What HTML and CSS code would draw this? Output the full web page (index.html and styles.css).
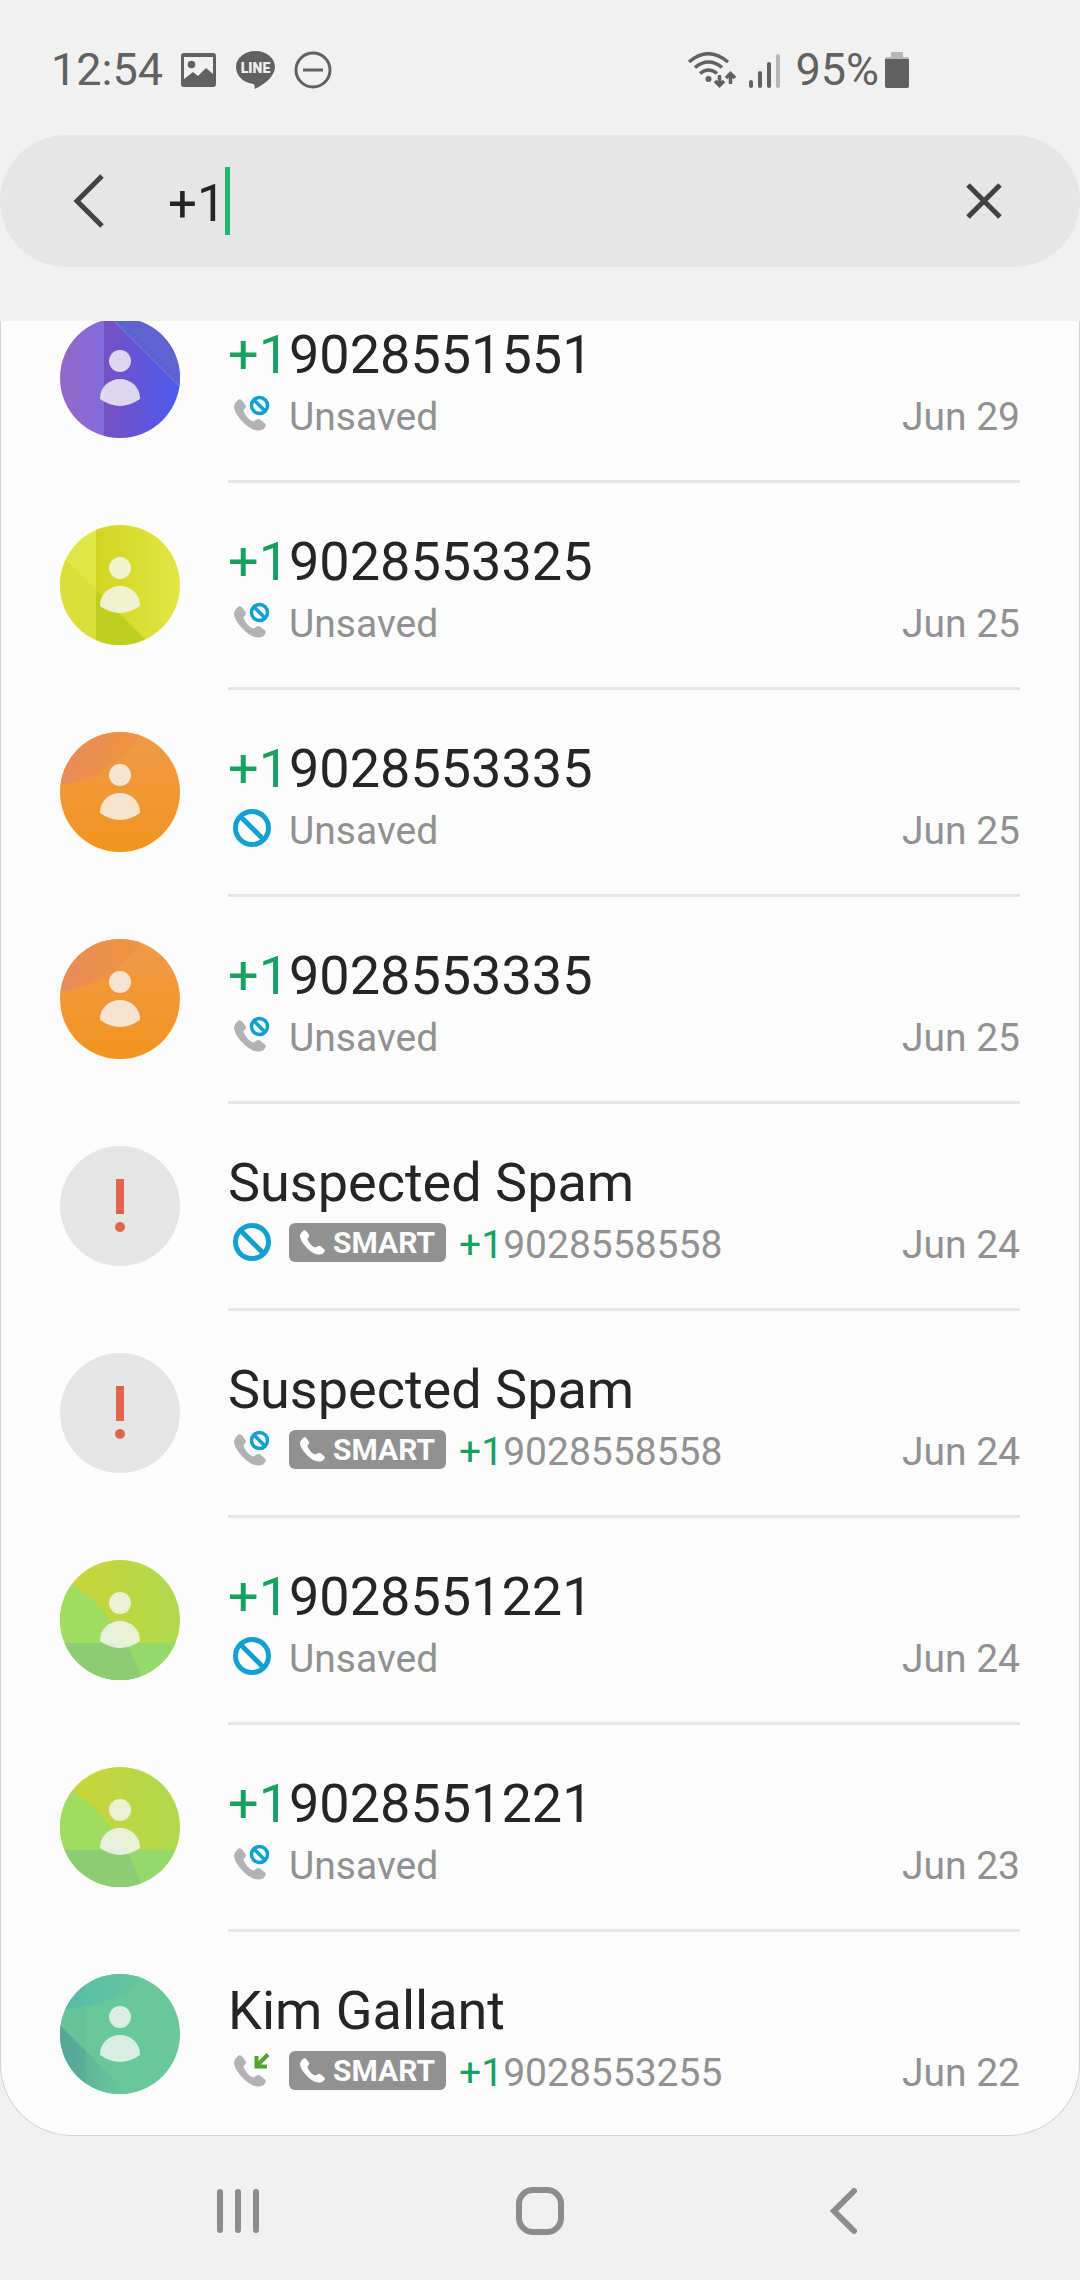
FILE: index.html
```html
<!DOCTYPE html>
<html lang="en">
<head>
<meta charset="utf-8">
<meta name="viewport" content="width=device-width, initial-scale=1">
<title>Search calls</title>
<link rel="stylesheet" href="styles.css">
</head>
<body>
<svg class="sprite" width="0" height="0" aria-hidden="true">
  <defs>
    <linearGradient id="purple-left"><stop offset="0" stop-color="#9666c8"/><stop offset="1" stop-color="#826cdb"/></linearGradient>
    <linearGradient id="purple-right"><stop offset="0" stop-color="#7850c2"/><stop offset="1" stop-color="#4b5bf0"/></linearGradient>
    <linearGradient id="yellow-right"><stop offset="0" stop-color="#d2d51f"/><stop offset="1" stop-color="#e2e645"/></linearGradient>
    <linearGradient id="orange-base" x2="0" y2="1"><stop offset="0" stop-color="#ef9a4a"/><stop offset="1" stop-color="#f3941e"/></linearGradient>
    <linearGradient id="orange-arc" gradientUnits="userSpaceOnUse" x1="8" y1="30" x2="66" y2="44"><stop offset="0" stop-color="#e88c5a"/><stop offset="1" stop-color="#ee933e"/></linearGradient>
    <linearGradient id="lime-base"><stop offset="0" stop-color="#cdd335"/><stop offset="1" stop-color="#aeda4e"/></linearGradient>
    <linearGradient id="teal-arc" gradientUnits="userSpaceOnUse" x1="5" y1="30" x2="82" y2="30"><stop offset="0" stop-color="#59bba8"/><stop offset="1" stop-color="#66c69d"/></linearGradient>
    <linearGradient id="teal-dark" gradientUnits="userSpaceOnUse" x1="0" y1="0" x2="62" y2="0"><stop offset="0" stop-color="#58a998"/><stop offset="1" stop-color="#68c79a"/></linearGradient>
    <clipPath id="disc"><circle cx="60" cy="60" r="60"/></clipPath>

    <symbol id="person" viewBox="0 0 120 120">
      <circle cx="60" cy="43" r="11"/>
      <path d="M40 81v-1a20 19 0 0 1 40 0v1q-20 14-40 0z"/>
    </symbol>
    <symbol id="avatar-purple" viewBox="0 0 120 120">
      <g clip-path="url(#disc)">
        <path d="M0 0h44v120H0z" fill="url(#purple-left)"/>
        <path d="M44 0h76v120H44z" fill="url(#purple-right)"/>
        <path d="M51 0h69v69z" fill="#5f63d2"/>
        <path d="M51 0l69 69" stroke="#7c7ee0" stroke-width="1"/>
      </g>
      <use href="#person" fill="#f8f8f8" fill-opacity=".8"/>
    </symbol>
    <symbol id="avatar-yellow" viewBox="0 0 120 120">
      <g clip-path="url(#disc)">
        <path d="M0 0h36v120H0z" fill="#e0e646"/>
        <path d="M0 29l36 36v55H0z" fill="#dadf39"/>
        <path d="M36 0h84v120H36z" fill="url(#yellow-right)"/>
        <path d="M36 65l55 55H36z" fill="#bfcf1f"/>
      </g>
      <use href="#person" fill="#f8f8f8" fill-opacity=".8"/>
    </symbol>
    <symbol id="avatar-orange" viewBox="0 0 120 120">
      <g clip-path="url(#disc)">
        <path d="M0 0h120v120H0z" fill="url(#orange-base)"/>
        <circle cx="-10" cy="-54" r="107" fill="url(#orange-arc)"/>
      </g>
      <use href="#person" fill="#f8f8f8" fill-opacity=".8"/>
    </symbol>
    <symbol id="avatar-lime" viewBox="0 0 120 120">
      <g clip-path="url(#disc)">
        <path d="M0 0h120v120H0z" fill="url(#lime-base)"/>
        <path d="M0 16l13 8Q58 55 80 113v7H0z" fill="#a0dc5e"/>
        <path d="M0 83h120v37H0z" fill="#94da6b"/>
        <path d="M0 83h66q8 14 14 30l2 7H0z" fill="#8ecb75"/>
      </g>
      <use href="#person" fill="#f8f8f8" fill-opacity=".8"/>
    </symbol>
    <symbol id="avatar-teal" viewBox="0 0 120 120">
      <g clip-path="url(#disc)">
        <path d="M0 0h120v120H0z" fill="#69c89a"/>
        <path d="M0 0h26v120H0z" fill="#66c49b"/>
        <path d="M0 0h90Q60 32 0 36z" fill="url(#teal-arc)"/>
        <path d="M0 51l69 69H0z" fill="url(#teal-dark)"/>
        <path d="M0 51l26 26v43H0z" fill="#4d9c96" fill-opacity=".25"/>
      </g>
      <use href="#person" fill="#f8f8f8" fill-opacity=".8"/>
    </symbol>
    <symbol id="avatar-spam" viewBox="0 0 120 120">
      <circle cx="60" cy="60" r="60" fill="#e5e5e5"/>
      <path d="M56 33h8v35h-8z" fill="#e1654a"/>
      <circle cx="60" cy="81" r="5" fill="#e1654a"/>
    </symbol>

    <symbol id="handset" viewBox="0 0 32 32">
      <path d="M3.500 1.500Q6-1 8.500 2l3 4Q13 8.500 9.500 11C9.500 14 15 22 20 22.500q4-3.500 6-2l5 4q2 2-1 5C26 33 19 32 12 26 5 19.500 0 13 0 7q.5-3 3.500-5.500z"/>
    </symbol>
    <symbol id="call-rejected" viewBox="0 0 48 48">
      <use href="#handset" x="6" y="9" width="32" height="32" fill="#b0b2b5"/>
      <g fill="#fcfcfc" stroke="#11a0cf" stroke-width="3.500"><circle cx="31.500" cy="15.500" r="8"/><path d="M26 10l11 11"/></g>
    </symbol>
    <symbol id="call-incoming" viewBox="0 0 48 48">
      <use href="#handset" x="6" y="9" width="32" height="32" fill="#b0b2b5"/>
      <path d="M40 8.500L29.500 19M28.500 10v10.500H39" fill="none" stroke="#52a32f" stroke-width="4"/>
    </symbol>
    <symbol id="blocked" viewBox="0 0 48 48">
      <g fill="none" stroke="#11a0cf" stroke-width="5"><circle cx="24" cy="24" r="16.500"/><path d="M12.500 12.500l23 23"/></g>
    </symbol>
  </defs>
</svg>

<header class="status">
  <time class="status-text">12:54</time>
  <svg class="status-image" viewBox="0 0 35 34" aria-hidden="true"><path fill="#616161" fill-rule="evenodd" d="M3 0h29q3 0 3 3v28q0 3-3 3H3q-3 0-3-3V3q0-3 3-3zM3 4v22l9-7 5 4 8-8 7 6V4z"/><circle cx="10.500" cy="11.500" r="3.800" fill="#616161"/></svg>
  <svg class="status-line" viewBox="0 0 39 38" aria-hidden="true"><path fill="#616161" d="M19.500 0C30.500 0 39 7 39 16c0 8-9 17-20.500 22 .5-3 0-5-2-5.300C7 31.500 0 24.500 0 16 0 7 8.500 0 19.500 0z"/><text class="line-word" x="19.500" y="22" text-anchor="middle">LINE</text></svg>
  <svg class="status-dnd" viewBox="0 0 38 38" aria-hidden="true"><g fill="none" stroke="#616161" stroke-width="3"><circle cx="19" cy="19" r="17"/><path d="M9 19h20"/></g></svg>
  <div class="status-right">
    <svg class="status-wifi" viewBox="0 0 48 36" aria-hidden="true">
      <g fill="none" stroke="#616161" stroke-width="3.500"><path d="M1 10Q20-6.500 40 10M7 15.500q13.500-11 27 0M12 21.500q8.500-7 17 0"/><path d="M31.500 23v11M27 29l4.500 4.500L36 29M42.500 32V21M38 26l4.500-4.500L47 26"/></g>
      <circle cx="20.500" cy="27" r="3" fill="#616161"/>
    </svg>
    <svg class="status-signal" viewBox="0 0 32 36" aria-hidden="true"><g fill="none" stroke="#616161" stroke-width="4" stroke-linecap="round"><path d="M2 30v4M11 21v13M20 12v22"/><path stroke="#b8b8b8" d="M29 4v30"/></g></svg>
    <span class="status-text">95%</span>
    <svg class="status-battery" viewBox="0 0 24 36" aria-hidden="true"><path fill="#b8b8b8" d="M6 0h12v5h4q2 0 2 2v2H0V7q0-2 2-2h4z"/><path fill="#616161" d="M0 7h24v27q0 2-2 2H2q-2 0-2-2z"/></svg>
  </div>
</header>

<form class="search" role="search">
  <button class="icon-button" type="button" aria-label="Back"><svg width="40" height="60" viewBox="0 0 40 60"><path d="M34 5L9 30l25 25" fill="none" stroke="#424242" stroke-width="5"/></svg></button>
  <div class="field">
    <input class="query" type="text" value="+1" aria-label="Search" autocomplete="off">
    <span class="caret"></span>
  </div>
  <button class="icon-button" type="button" aria-label="Clear"><svg width="36" height="36" viewBox="0 0 36 36"><path d="M2 2l32 32M34 2L2 34" fill="none" stroke="#424242" stroke-width="5"/></svg></button>
</form>

<main class="panel">
  <ul class="calls">
    <li class="call"><svg class="avatar" aria-hidden="true"><use href="#avatar-purple"/></svg><div class="details"><h2 class="name"><mark>+1</mark>9028551551</h2><div class="meta"><svg class="kind" aria-hidden="true"><use href="#call-rejected"/></svg><span class="note">Unsaved</span><time class="date">Jun 29</time></div></div></li>
    <li class="call"><svg class="avatar" aria-hidden="true"><use href="#avatar-yellow"/></svg><div class="details"><h2 class="name"><mark>+1</mark>9028553325</h2><div class="meta"><svg class="kind" aria-hidden="true"><use href="#call-rejected"/></svg><span class="note">Unsaved</span><time class="date">Jun 25</time></div></div></li>
    <li class="call"><svg class="avatar" aria-hidden="true"><use href="#avatar-orange"/></svg><div class="details"><h2 class="name"><mark>+1</mark>9028553335</h2><div class="meta"><svg class="kind" aria-hidden="true"><use href="#blocked"/></svg><span class="note">Unsaved</span><time class="date">Jun 25</time></div></div></li>
    <li class="call"><svg class="avatar" aria-hidden="true"><use href="#avatar-orange"/></svg><div class="details"><h2 class="name"><mark>+1</mark>9028553335</h2><div class="meta"><svg class="kind" aria-hidden="true"><use href="#call-rejected"/></svg><span class="note">Unsaved</span><time class="date">Jun 25</time></div></div></li>
    <li class="call"><svg class="avatar" aria-hidden="true"><use href="#avatar-spam"/></svg><div class="details"><h2 class="name">Suspected Spam</h2><div class="meta"><svg class="kind" aria-hidden="true"><use href="#blocked"/></svg><span class="badge"><svg class="badge-icon" aria-hidden="true"><use href="#handset"/></svg>SMART</span><span class="note"><mark>+1</mark>9028558558</span><time class="date">Jun 24</time></div></div></li>
    <li class="call"><svg class="avatar" aria-hidden="true"><use href="#avatar-spam"/></svg><div class="details"><h2 class="name">Suspected Spam</h2><div class="meta"><svg class="kind" aria-hidden="true"><use href="#call-rejected"/></svg><span class="badge"><svg class="badge-icon" aria-hidden="true"><use href="#handset"/></svg>SMART</span><span class="note"><mark>+1</mark>9028558558</span><time class="date">Jun 24</time></div></div></li>
    <li class="call"><svg class="avatar" aria-hidden="true"><use href="#avatar-lime"/></svg><div class="details"><h2 class="name"><mark>+1</mark>9028551221</h2><div class="meta"><svg class="kind" aria-hidden="true"><use href="#blocked"/></svg><span class="note">Unsaved</span><time class="date">Jun 24</time></div></div></li>
    <li class="call"><svg class="avatar" aria-hidden="true"><use href="#avatar-lime"/></svg><div class="details"><h2 class="name"><mark>+1</mark>9028551221</h2><div class="meta"><svg class="kind" aria-hidden="true"><use href="#call-rejected"/></svg><span class="note">Unsaved</span><time class="date">Jun 23</time></div></div></li>
    <li class="call"><svg class="avatar" aria-hidden="true"><use href="#avatar-teal"/></svg><div class="details"><h2 class="name">Kim Gallant</h2><div class="meta"><svg class="kind" aria-hidden="true"><use href="#call-incoming"/></svg><span class="badge"><svg class="badge-icon" aria-hidden="true"><use href="#handset"/></svg>SMART</span><span class="note"><mark>+1</mark>9028553255</span><time class="date">Jun 22</time></div></div></li>
  </ul>
</main>

<nav class="system-nav" aria-label="System">
  <button class="nav-button" type="button" aria-label="Recents"><svg width="48" height="48" viewBox="0 0 48 48"><path d="M6 5v38M24 5v38M42 5v38"/></svg></button>
  <button class="nav-button" type="button" aria-label="Home"><svg width="48" height="48" viewBox="0 0 48 48"><rect x="3" y="3" width="42" height="42" rx="14"/></svg></button>
  <button class="nav-button" type="button" aria-label="Back"><svg width="48" height="48" viewBox="0 0 48 48"><path d="M36 4L16 24l20 20"/></svg></button>
</nav>
</body>
</html>
```
FILE: styles.css
```css
* { box-sizing: border-box; }

body {
  margin: 0;
  min-height: 100vh;
  display: flex;
  flex-direction: column;
  background: #f1f1f1;
  color: #252525;
  font-family: Roboto, sans-serif;
}

svg { display: block; flex: none; }
button { padding: 0; border: 0; background: none; cursor: pointer; }
mark { background: none; color: #17a05f; }

/* Status bar */
.status {
  height: 135px;
  padding: 4px 171px 0 51px;
  display: flex;
  align-items: center;
  color: #616161;
}
.status-text { font-size: 45px; line-height: 54px; }
.status-image { width: 35px; height: 34px; margin-left: 18px; }
.status-line { width: 39px; height: 38px; margin-left: 20px; }
.status-dnd { width: 38px; height: 38px; margin-left: 19px; }
.line-word { fill: #f1f1f1; font-size: 14px; font-weight: 900; }
.status-right { margin-left: auto; display: flex; align-items: center; }
.status-signal { width: 32px; height: 36px; margin: 0 14px 0 13px; }
.status-wifi { width: 48px; height: 36px; }
.status-battery { width: 24px; height: 36px; margin-left: 6px; }

/* Search bar */
.search {
  height: 132px;
  margin-bottom: 54px;
  padding: 0 48px 0 40px;
  display: flex;
  align-items: center;
  border-radius: 66px;
  background: #e6e6e6;
}
.icon-button {
  width: 96px;
  height: 96px;
  display: grid;
  place-items: center;
}
.field { position: relative; flex: 1; padding-left: 32px; }
.query {
  width: 100%;
  height: 68px;
  padding: 4px 0 0;
  border: 0;
  outline: 0;
  background: none;
  color: #252525;
  font: 51px/64px Roboto, sans-serif;
}
.caret {
  position: absolute;
  left: 89px;
  top: 0;
  width: 5px;
  height: 68px;
  background: #21b573;
}

/* Call list, scrolled part of the way through its first row */
.panel {
  flex: 1;
  overflow: hidden;
  border: 1px solid #d2d2d2;
  border-top: 0;
  border-radius: 0 0 72px 72px;
  background: #fcfcfc;
}
.calls { margin: -45px 0 0; padding: 0; list-style: none; }
.call { display: flex; padding: 0 59px; }
.avatar { width: 120px; height: 120px; margin: 42px 48px 0 0; }
.details {
  flex: 1;
  min-width: 0;
  padding: 47px 0 39px;
  border-bottom: 3px solid #e6e6e6;
}
.call:last-child .details { padding-bottom: 38px; border-bottom: 0; }
.name { margin: 0; font-size: 54px; font-weight: 400; line-height: 64px; }
.meta { height: 54px; display: flex; align-items: center; gap: 13px; }
.kind { width: 48px; height: 48px; }
.note, .date {
  padding-top: 6px;
  color: #919191;
  font-size: 39px;
  line-height: 48px;
  white-space: nowrap;
}
.date { margin-left: auto; }
.badge {
  height: 39px;
  padding: 0 11px;
  display: flex;
  align-items: center;
  gap: 8px;
  border-radius: 6px;
  background: #919191;
  color: #fcfcfc;
  font-size: 30px;
  font-weight: 700;
  line-height: 39px;
}
.badge-icon { width: 25px; height: 25px; fill: #fcfcfc; }

/* Navigation keys */
.system-nav {
  height: 144px;
  padding: 6px 8% 0;
  display: grid;
  grid-template-columns: repeat(3, 1fr);
}
.nav-button {
  display: grid;
  place-items: center;
  fill: none;
  stroke: #8c8c8c;
  stroke-width: 6px;
  stroke-linecap: round;
}
```
